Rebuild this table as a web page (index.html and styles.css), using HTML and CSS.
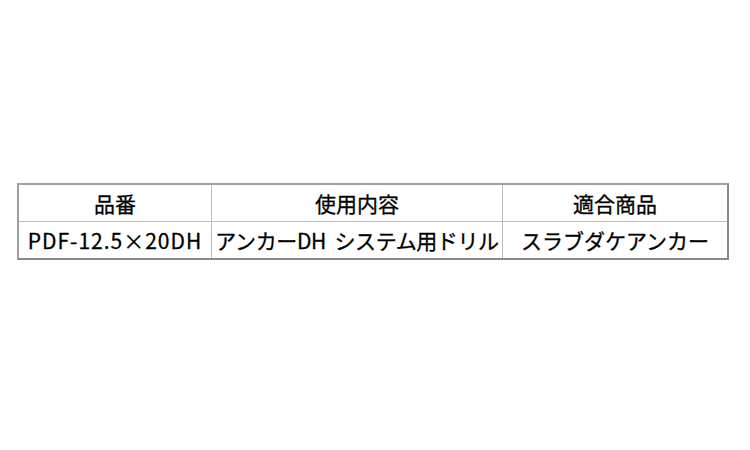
FILE: index.html
```html
<!DOCTYPE html>
<html lang="ja">
<head>
<meta charset="utf-8">
<link rel="stylesheet" href="styles.css">
</head>
<body>
<div class="wrap">
<table class="spec">
<tr><th class="c1">品番</th><th class="c2">使用内容</th><th class="c3">適合商品</th></tr>
<tr><td>PDF-12.5×20DH</td><td class="use">アンカーDH&nbsp;&nbsp;システム用ドリル</td><td>スラブダケアンカー</td></tr>
</table>
</div>
</body>
</html>
```
FILE: styles.css
```css
html, body { margin: 0; padding: 0; background: #fff; }
.wrap { padding: 183px 0 0 17px; }
.spec {
  border-collapse: separate;
  border-spacing: 0;
  border-top: 2px solid #a0a0a0;
  border-left: 2px solid #a0a0a0;
  border-right: 2px solid #8a8a8a;
  border-bottom: 2px solid #8a8a8a;
  width: 712px;
  font-family: "Noto Sans CJK JP", sans-serif;
  font-size: 21px;
  color: #000;
  table-layout: fixed;
  -webkit-text-stroke: 0.3px #000;
}
.spec th, .spec td {
  height: 36px;
  padding: 0;
  text-align: center;
  font-weight: normal;
  border-right: 1px solid #bdbdbd;
  border-bottom: 1px solid #bdbdbd;
  white-space: nowrap;
  line-height: 1;
}
.spec td:first-child { letter-spacing: 1px; }
.spec td.use { letter-spacing: -0.4px; }
.spec tr:last-child td { border-bottom: none; }
.spec th:last-child, .spec td:last-child { border-right: none; }
.c1 { width: 192px; }
.c2 { width: 290px; }
.c3 { width: auto; }
```
